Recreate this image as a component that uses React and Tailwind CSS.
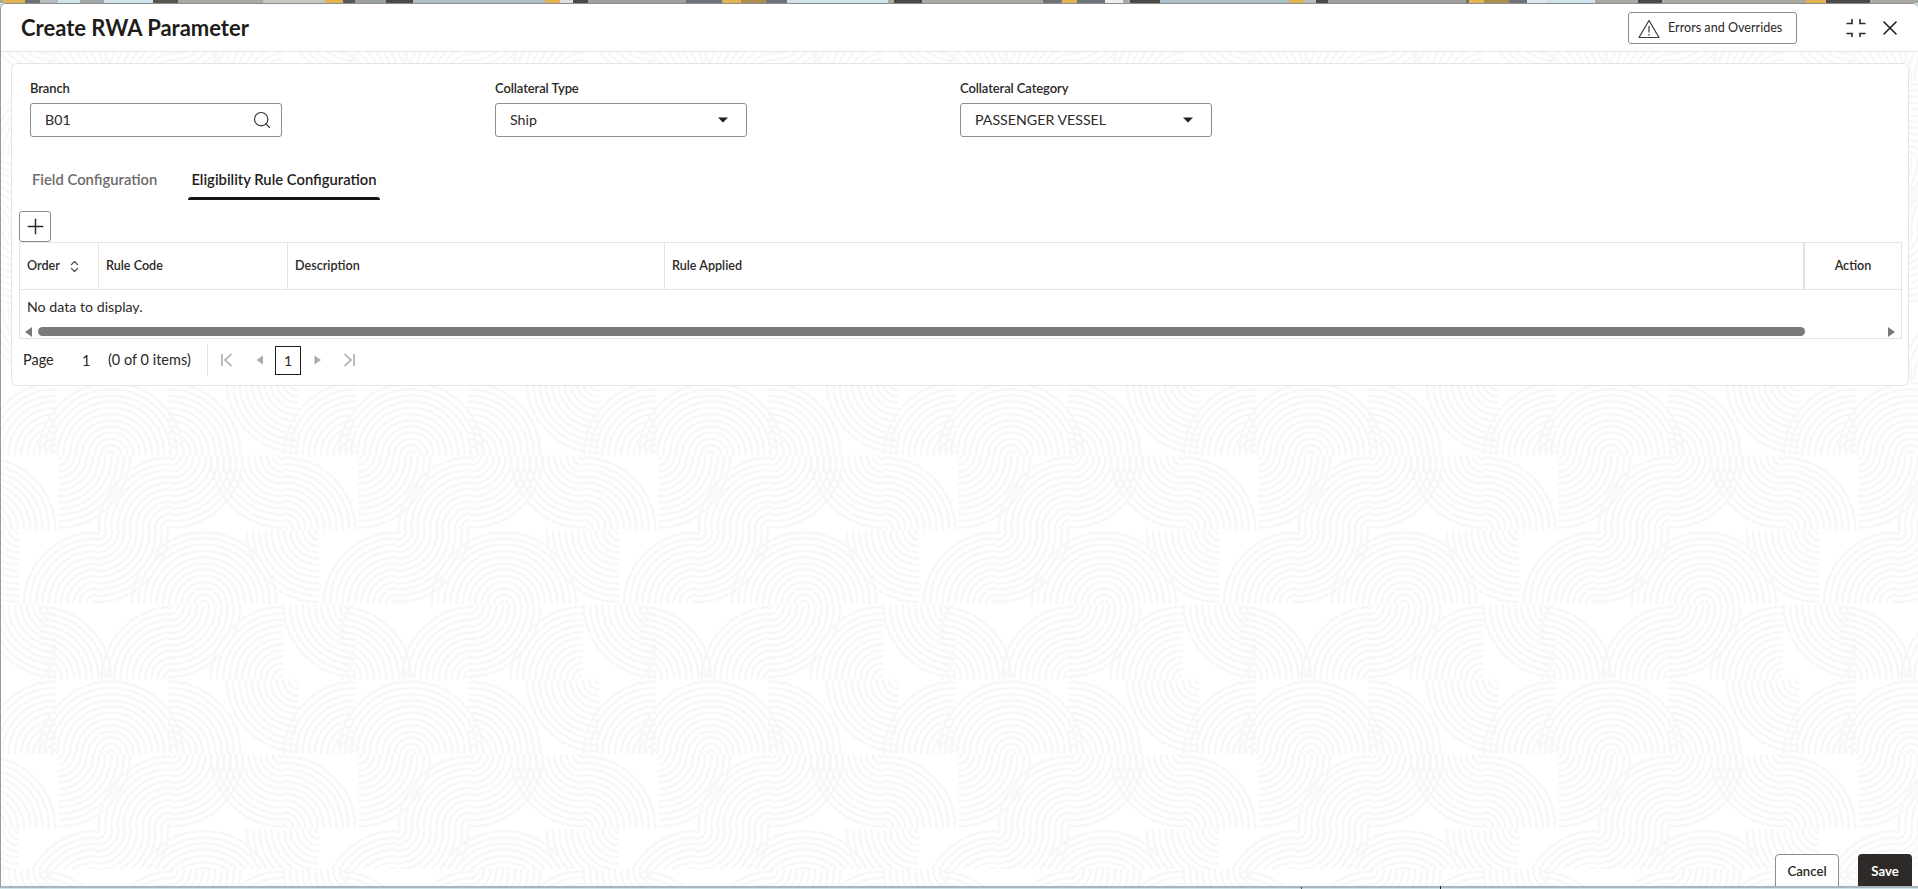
import React from "react";
import { ChevronsUpDown, Plus, Search, X } from "lucide-react";

// Bits of the page behind the dialog that show above it
const stripSegments = [
  [0, 3, "#a9a9a3"], [3, 25, "#e2b552"], [25, 40, "#6b7278"], [40, 58, "#b9bcbc"], [58, 80, "#cfe1ea"],
  [80, 104, "#a2a8aa"], [104, 153, "#cfe1ea"], [153, 178, "#55554f"], [178, 263, "#a9a9a3"], [263, 325, "#c6c6c0"],
  [325, 343, "#e2b552"], [343, 355, "#55585a"], [355, 386, "#9aa0a2"], [386, 413, "#4a4a48"], [413, 545, "#aebfc7"],
  [545, 560, "#e2b552"], [560, 573, "#dddddd"], [573, 588, "#4a4a48"], [588, 686, "#9f9f9c"], [686, 722, "#6d7378"],
  [722, 741, "#e2b552"], [741, 766, "#a98e4c"], [766, 787, "#6d7378"], [787, 888, "#cfe1ea"], [888, 894, "#a9a9a3"],
  [894, 922, "#4a4a48"], [922, 1043, "#a9a9a3"], [1043, 1062, "#6d7378"], [1062, 1077, "#e2b552"], [1077, 1105, "#6d7378"],
  [1105, 1123, "#eeeeee"], [1123, 1130, "#a9a9a3"], [1130, 1160, "#4a4a48"], [1160, 1289, "#aebfc7"], [1289, 1304, "#e2b552"],
  [1304, 1316, "#b9bcbc"], [1316, 1328, "#4a4a48"], [1328, 1466, "#9f9f9c"], [1466, 1469, "#6d7378"], [1469, 1484, "#e2b552"],
  [1484, 1509, "#a98e4c"], [1509, 1527, "#6d7378"], [1527, 1546, "#dce8ee"], [1546, 1595, "#cfe1ea"], [1595, 1632, "#a9a9a3"],
  [1632, 1638, "#a9a9a3"], [1638, 1662, "#4a4a48"], [1662, 1803, "#a9a9a3"], [1803, 1806, "#a9a9a3"], [1806, 1826, "#e2b552"],
  [1826, 1870, "#4a4a48"], [1870, 1918, "#a9a9a3"],
];

const TopStrip = () => (
  <svg className="block w-full h-[3px] shrink-0" viewBox="0 0 1918 3" preserveAspectRatio="none">
    {stripSegments.map(([from, to, color]) => (
      <rect key={from} x={from} y="0" width={to - from} height="3" fill={color} />
    ))}
  </svg>
);

// Quarter rings of the page watermark: [center x, "t"op or "b"ottom of the row, quadrant]
const watermarkRows = [
  [[110, "b", "ul"], [110, "b", "ur"], [55, "b", "ul"], [167, "b", "ur"], [298, "t", "ll"]],
  [[282, "b", "ur"], [57, "t", "lr"], [170, "b", "ul"], [170, "t", "lr"], [282, "t", "ll"]],
  [[95, "b", "ul"], [95, "t", "lr"], [203, "b", "ul"], [203, "b", "ur"], [18, "t", "ll"]],
  [[38, "b", "ur"], [55, "t", "ll"], [173, "b", "ul"], [167, "t", "lr"], [282, "b", "ul"]],
];

const ROW_H = 74.7;
const RADII = Array.from({ length: 12 }, (_, i) => 4 + i * 6.2);

const ringPath = (cx, cy, q, r) => {
  if (q === "ul") return `M${cx - r} ${cy}A${r} ${r} 0 0 1 ${cx} ${cy - r}`;
  if (q === "ur") return `M${cx} ${cy - r}A${r} ${r} 0 0 1 ${cx + r} ${cy}`;
  if (q === "lr") return `M${cx + r} ${cy}A${r} ${r} 0 0 1 ${cx} ${cy + r}`;
  return `M${cx} ${cy + r}A${r} ${r} 0 0 1 ${cx - r} ${cy}`;
};

const WatermarkRow = ({ kind, y }) => (
  <svg x="0" y={y} width="300" height={ROW_H}>
    {watermarkRows[kind].map(([cx, side, q]) =>
      [-300, 0, 300].map((shift) =>
        RADII.map((r) => (
          <path
            key={`${cx}${side}${q}${shift}${r}`}
            d={ringPath(cx + shift, side === "b" ? ROW_H : 0, q, r)}
            fill="none"
            stroke="#f7f7f7"
            strokeWidth="2.5"
          />
        ))
      )
    )}
  </svg>
);

const Watermark = () => (
  <svg className="absolute inset-0 w-full h-full" aria-hidden="true">
    <defs>
      <pattern id="rings" patternUnits="userSpaceOnUse" width="300" height="862" y="3">
        {Array.from({ length: 12 }, (_, i) => (
          <WatermarkRow key={i} kind={(i + 3) % 4} y={i * ROW_H} />
        ))}
      </pattern>
    </defs>
    <rect width="100%" height="100%" fill="url(#rings)" />
  </svg>
);

const WarningIcon = () => (
  <svg width="22" height="20" viewBox="0 0 22 20" fill="none" stroke="#3a3a3a" strokeWidth="1.2" strokeLinejoin="round">
    <path d="M11 1.5 21 18.5H1Z" />
    <path d="M11 7v6.5M11 15v1.5" />
  </svg>
);

const CompressIcon = () => (
  <svg width="20" height="20" viewBox="0 0 20 20" fill="none" stroke="#2b2b2b" strokeWidth="1.6">
    <path d="M0.5 5.5H6V1M19.5 5.5H14V1M0.5 15.5H6V19M19.5 15.5H14V19" />
  </svg>
);

const Field = ({ label, value, children }) => (
  <div className="w-[252px]">
    <div className="h-[18px] mb-[6px] text-[13px] leading-[18px] font-semibold text-[#2b2826] tracking-[-0.1px]">{label}</div>
    <div className="h-[34px] flex items-center justify-between pl-[14px] pr-[9px] border border-[#8d8d8d] rounded-[3px] bg-white text-[14.2px] text-[#2b2826]">
      <span>{value}</span>
      {children}
    </div>
  </div>
);

const Caret = () => (
  <svg width="10" height="6" viewBox="0 0 10 6" className="mr-[9px]">
    <path d="M0 0.5H10L5 5.5Z" fill="#1f1f1f" />
  </svg>
);

const PagerIcon = ({ d, filled }) => (
  <svg width="12" height="14" viewBox="0 0 12 14" fill={filled ? "#ababab" : "none"} stroke={filled ? "none" : "#ababab"} strokeWidth="1.6">
    <path d={d} />
  </svg>
);

const columns = [
  { label: "Rule Code", width: "w-[189px]" },
  { label: "Description", width: "w-[377px]" },
  { label: "Rule Applied", width: "w-[1139px]" },
];

const RulesTable = () => (
  <div className="border border-[#e3e3e3]">
    <div className="flex h-[47px] border-b border-[#e3e3e3] text-[12.6px] font-semibold text-[#2b2826]">
      <div className="w-[79px] flex items-center pl-[7px] border-r border-[#e3e3e3]">
        <span>Order</span>
        <ChevronsUpDown size={15} strokeWidth={1.8} className="ml-[7px] text-[#444]" />
      </div>
      {columns.map((col) => (
        <div key={col.label} className={`${col.width} flex items-center pl-[7px] border-r border-[#e3e3e3]`}>
          {col.label}
        </div>
      ))}
      <div className="flex-1 flex items-center justify-center border-l border-[#e3e3e3]">Action</div>
    </div>
    <div className="h-[36px] pb-[2px] flex items-center pl-[7px] text-[14.2px] text-[#2b2826]">No data to display.</div>
    <div className="h-[12px] flex items-start">
      <svg width="8" height="10" viewBox="0 0 8 10" className="ml-[5px] mt-[1px]">
        <path d="M7 0V10L0 5Z" fill="#7a7a7a" />
      </svg>
      <div className="ml-[5px] w-[1767px] h-[9px] mt-[1px] rounded-full bg-[#7a7a7a]" />
      <svg width="8" height="10" viewBox="0 0 8 10" className="ml-[83px] mt-[1px]">
        <path d="M0 0V10L7 5Z" fill="#7a7a7a" />
      </svg>
    </div>
  </div>
);

const Pager = () => (
  <div className="flex items-center h-[32px] mt-[5px] pl-[4px] text-[14.5px] text-[#2b2826]">
    <span className="w-[59px]">Page</span>
    <span className="w-[26px] pt-[2px]">1</span>
    <span className="w-[99px]">(0 of 0 items)</span>
    <div className="w-px h-[32px] bg-[#e3e3e3] mr-[13px]" />
    <PagerIcon d="M1 1V13M10.5 1 4 7l6.5 6" />
    <div className="w-[20px]" />
    <PagerIcon filled d="M10 2.5V11.5L3.5 7Z" />
    <div className="w-[10px]" />
    <div className="w-[26px] h-[29px] flex items-center justify-center border border-[#1f1f1f] text-[14px]">1</div>
    <div className="w-[11px]" />
    <PagerIcon filled d="M2.5 2.5V11.5L9 7Z" />
    <div className="w-[19px]" />
    <PagerIcon d="M1.5 1 8 7l-6.5 6M11 1V13" />
  </div>
);

export default function App() {
  return (
    <div className="relative h-screen w-full overflow-hidden flex flex-col bg-[#cfe3ea] font-[Lato,'Noto_Sans',sans-serif]">
      <TopStrip />

      <div className="relative flex-1 min-h-0 mb-[1px] flex flex-col overflow-hidden bg-white rounded-tl-[6px] rounded-tr-[6px] border-t border-[#8d8d8d] border-l border-l-[#9a9a9a] border-b-2 border-b-[#a8b5bd]">
        <Watermark />

        {/* Dialog header */}
        <div className="relative h-[48px] shrink-0 flex items-center pl-[20px] bg-white border-b border-[#e5e5e5]">
          <h1 className="text-[22px] font-bold text-[#1f1d1b]">Create RWA Parameter</h1>
          <button className="ml-auto w-[169px] h-[32px] flex items-center pl-[9px] gap-[8px] pt-[2px] border border-[#8d8d8d] rounded-[3px] text-[12.6px] text-[#2b2826]">
            <WarningIcon />
            <span>Errors and Overrides</span>
          </button>
          <div className="ml-[49px]">
            <CompressIcon />
          </div>
          <X size={24} strokeWidth={1.6} className="ml-[12px] mr-[16px] text-[#1f1f1f]" />
        </div>

        {/* Form card */}
        <div className="relative mt-[11px] ml-[10px] mr-[9px] h-[323px] pl-[7px] pr-[6px] bg-white border border-[#e5e5e5] rounded-[6px]">
          <div className="flex pt-[15px] pl-[11px] gap-[213px]">
            <Field label="Branch" value="B01">
              <Search size={20} strokeWidth={1.4} className="text-[#333]" />
            </Field>
            <Field label="Collateral Type" value="Ship">
              <Caret />
            </Field>
            <Field label="Collateral Category" value="PASSENGER VESSEL">
              <Caret />
            </Field>
          </div>

          <div className="flex h-[63px] pl-[13px] text-[14.8px] font-semibold">
            <div className="w-[156px] pt-[32px] leading-[20px] text-[#6b6b6b]">Field Configuration</div>
            <div className="relative w-[192px] pt-[32px] text-center leading-[20px] text-[#1f1d1b]">
              Eligibility Rule Configuration
              <div className="absolute left-0 right-0 bottom-0 h-[3px] rounded-t-[3px] bg-[#161513]" />
            </div>
          </div>

          <button className="mt-[11px] w-[32px] h-[31px] flex items-center justify-center border border-[#8d8d8d] rounded-[3px] text-[#2b2826]">
            <Plus size={25} strokeWidth={1.4} />
          </button>

          <RulesTable />
          <Pager />
        </div>

        {/* Footer actions */}
        <div className="relative mt-auto h-[32px] shrink-0 flex items-start justify-end gap-[19px] pr-[6px] text-[13.2px]">
          <button className="w-[64px] h-[36px] pb-[1px] border border-[#8d8d8d] rounded-[4px] bg-white font-semibold text-[#2b2826]">Cancel</button>
          <button className="w-[54px] h-[36px] pb-[1px] rounded-[4px] bg-[#2e2a27] font-bold text-white">Save</button>
        </div>
      </div>

      {/* Specks of the page behind the dialog */}
      <div className="absolute left-[1301px] bottom-0 w-px h-[2px] bg-[#4a4a4a]" />
      <div className="absolute left-[1440px] bottom-0 w-px h-[3px] bg-[#222]" />
    </div>
  );
}
